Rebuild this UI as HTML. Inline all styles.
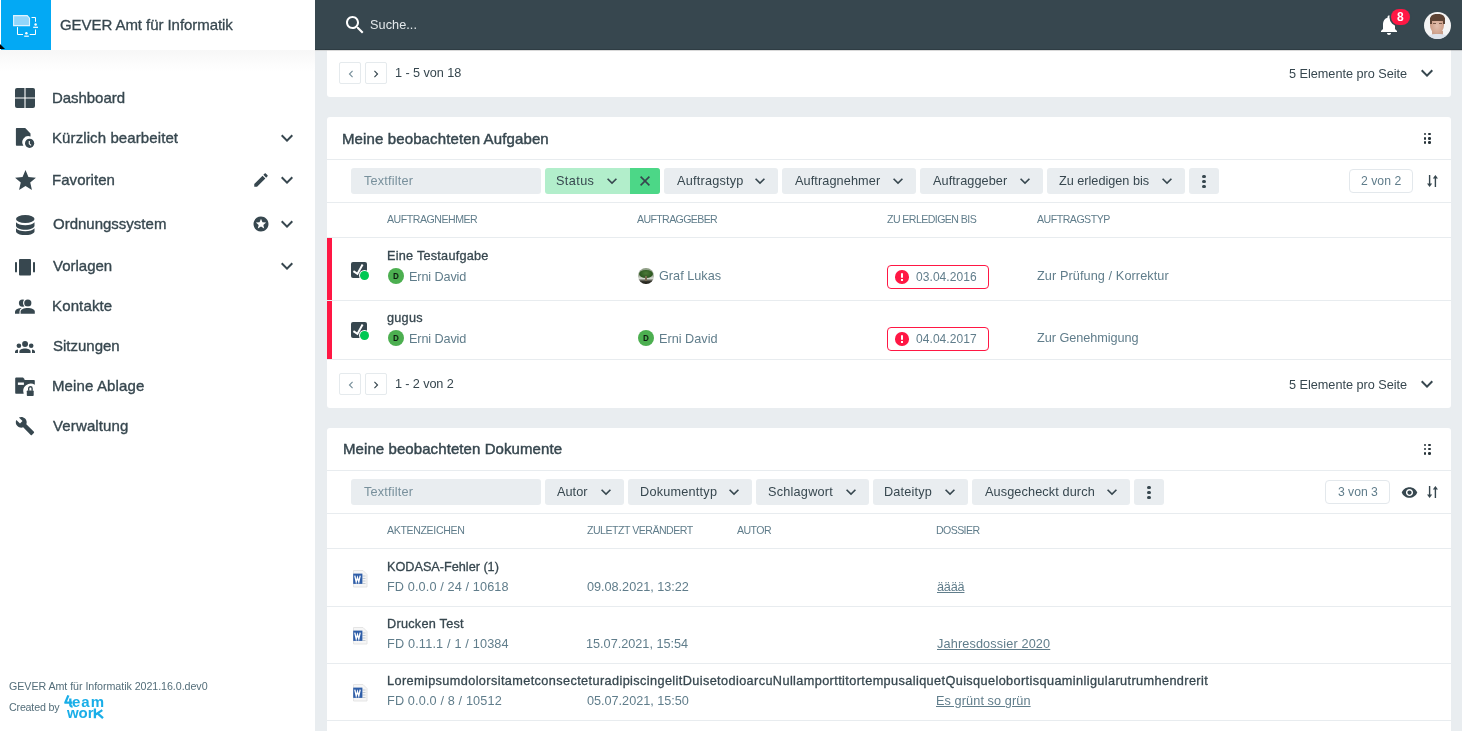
<!DOCTYPE html>
<html><head><meta charset="utf-8"><title>GEVER Dashboard</title>
<style>
html,body{margin:0;padding:0}
body{width:1462px;height:731px;overflow:hidden;position:relative;font-family:"Liberation Sans", sans-serif;background:#fff}
.t{position:absolute;white-space:nowrap;font-family:"Liberation Sans", sans-serif;will-change:transform}
svg{display:block}
</style></head><body>
<div style="position:absolute;left:315px;top:0px;width:1147px;height:731px;background:#e9edf0"></div>
<div style="position:absolute;left:327px;top:-20px;width:1124px;height:117px;background:#fff;border-radius:3px"></div>
<div style="position:absolute;left:327px;top:117px;width:1124px;height:291px;background:#fff;border-radius:3px"></div>
<div style="position:absolute;left:327px;top:428px;width:1124px;height:400px;background:#fff;border-radius:3px"></div>
<div style="position:absolute;left:339px;top:62px;width:20px;height:20px;border:1px solid #e5eaed;border-radius:2px;background:#fff"></div>
<div style="position:absolute;left:365px;top:62px;width:20px;height:20px;border:1px solid #e5eaed;border-radius:2px;background:#fff"></div>
<svg style="position:absolute;left:343.5px;top:66.5px;fill:#78909c" width="14" height="14" viewBox="0 0 24 24"><path d="M15.41 7.41L14 6l-6 6 6 6 1.41-1.41L10.83 12z"/></svg>
<svg style="position:absolute;left:369.3px;top:66.5px;fill:#37474f" width="14" height="14" viewBox="0 0 24 24"><path d="M10 6L8.59 7.41 13.17 12l-4.58 4.59L10 18l6-6z"/></svg>
<div class="t" style="left:394.70px;top:67.00px;font-size:12.7px;line-height:12.7px;color:#37474f;font-weight:normal;letter-spacing:-0.055px;">1 - 5 von 18</div>
<div class="t" style="left:1289.30px;top:68.00px;font-size:12.7px;line-height:12.7px;color:#37474f;font-weight:normal;letter-spacing:-0.021px;">5 Elemente pro Seite</div>
<svg style="position:absolute;left:1415.3px;top:60.99999999999999px;fill:#37474f" width="24" height="24" viewBox="0 0 24 24"><path d="M16.59 8.59L12 13.17 7.41 8.59 6 10l6 6 6-6z"/></svg>
<div class="t" style="left:342.40px;top:131.00px;font-size:15px;line-height:15px;color:#37474f;font-weight:normal;letter-spacing:0.123px;-webkit-text-stroke:0.45px #37474f;">Meine beobachteten Aufgaben</div>
<div style="position:absolute;left:1423.65px;top:132.95px;width:2.5px;height:2.5px;background:#263238;border-radius:50%"></div>
<div style="position:absolute;left:1423.65px;top:137.15px;width:2.5px;height:2.5px;background:#263238;border-radius:50%"></div>
<div style="position:absolute;left:1423.65px;top:141.35px;width:2.5px;height:2.5px;background:#263238;border-radius:50%"></div>
<div style="position:absolute;left:1428.05px;top:132.95px;width:2.5px;height:2.5px;background:#263238;border-radius:50%"></div>
<div style="position:absolute;left:1428.05px;top:137.15px;width:2.5px;height:2.5px;background:#263238;border-radius:50%"></div>
<div style="position:absolute;left:1428.05px;top:141.35px;width:2.5px;height:2.5px;background:#263238;border-radius:50%"></div>
<div style="position:absolute;left:327px;top:159px;width:1124px;height:1px;background:#e8ecef"></div>
<div style="position:absolute;left:351px;top:168px;width:190px;height:26px;background:#e9edf0;border-radius:3px"></div>
<div class="t" style="left:363.70px;top:175.00px;font-size:12.7px;line-height:12.7px;color:#78909c;font-weight:normal;letter-spacing:0.200px;">Textfilter</div>
<div style="position:absolute;left:545px;top:168px;width:115px;height:26px;background:#b2eecb;border-radius:3px"></div>
<div style="position:absolute;left:630px;top:168px;width:30px;height:26px;background:#4cd787;border-radius:0 3px 3px 0"></div>
<div class="t" style="left:556.20px;top:175.00px;font-size:12.7px;line-height:12.7px;color:#37474f;font-weight:normal;letter-spacing:0.400px;">Status</div>
<svg style="position:absolute;left:602px;top:170.8px;fill:#37474f" width="20" height="20" viewBox="0 0 24 24"><path d="M16.59 8.59L12 13.17 7.41 8.59 6 10l6 6 6-6z"/></svg>
<svg style="position:absolute;left:640px;top:176px;" width="10" height="10" viewBox="0 0 10 10"><path d="M0.6 0.6L9.4 9.4M9.4 0.6L0.6 9.4" stroke="#37474f" stroke-width="1.6"/></svg>
<div style="position:absolute;left:664.4px;top:168px;width:113.3px;height:26px;background:#e9edf0;border-radius:3px"></div>
<div class="t" style="left:676.60px;top:175.00px;font-size:12.7px;line-height:12.7px;color:#37474f;font-weight:normal;letter-spacing:0.220px;">Auftragstyp</div>
<svg style="position:absolute;left:749.9px;top:170.8px;fill:#37474f" width="20" height="20" viewBox="0 0 24 24"><path d="M16.59 8.59L12 13.17 7.41 8.59 6 10l6 6 6-6z"/></svg>
<div style="position:absolute;left:782.4px;top:168px;width:133.3px;height:26px;background:#e9edf0;border-radius:3px"></div>
<div class="t" style="left:794.60px;top:175.00px;font-size:12.7px;line-height:12.7px;color:#37474f;font-weight:normal;letter-spacing:0.100px;">Auftragnehmer</div>
<svg style="position:absolute;left:887.9px;top:170.8px;fill:#37474f" width="20" height="20" viewBox="0 0 24 24"><path d="M16.59 8.59L12 13.17 7.41 8.59 6 10l6 6 6-6z"/></svg>
<div style="position:absolute;left:920.3px;top:168px;width:122.6px;height:26px;background:#e9edf0;border-radius:3px"></div>
<div class="t" style="left:932.50px;top:175.00px;font-size:12.7px;line-height:12.7px;color:#37474f;font-weight:normal;letter-spacing:0.073px;">Auftraggeber</div>
<svg style="position:absolute;left:1015.1px;top:170.8px;fill:#37474f" width="20" height="20" viewBox="0 0 24 24"><path d="M16.59 8.59L12 13.17 7.41 8.59 6 10l6 6 6-6z"/></svg>
<div style="position:absolute;left:1047.1px;top:168px;width:137.8px;height:26px;background:#e9edf0;border-radius:3px"></div>
<div class="t" style="left:1059.30px;top:175.00px;font-size:12.7px;line-height:12.7px;color:#37474f;font-weight:normal;letter-spacing:-0.013px;">Zu erledigen bis</div>
<svg style="position:absolute;left:1157.1px;top:170.8px;fill:#37474f" width="20" height="20" viewBox="0 0 24 24"><path d="M16.59 8.59L12 13.17 7.41 8.59 6 10l6 6 6-6z"/></svg>
<div style="position:absolute;left:1189.2px;top:168px;width:30px;height:26px;background:#e9edf0;border-radius:3px"></div>
<div style="position:absolute;left:1202.4px;top:174.6px;width:3.2px;height:3.2px;background:#37474f;border-radius:50%"></div>
<div style="position:absolute;left:1202.4px;top:179.6px;width:3.2px;height:3.2px;background:#37474f;border-radius:50%"></div>
<div style="position:absolute;left:1202.4px;top:184.6px;width:3.2px;height:3.2px;background:#37474f;border-radius:50%"></div>
<div style="position:absolute;left:1348.5px;top:169.4px;width:64px;height:23.4px;border:1px solid #e3e8ec;border-radius:4px;background:#fff;box-sizing:border-box"></div>
<div class="t" style="left:1360.90px;top:175.00px;font-size:12.2px;line-height:12.2px;color:#607d8b;font-weight:normal;letter-spacing:0.033px;">2 von 2</div>
<svg style="position:absolute;left:1427px;top:174.8px;fill:#37474f" width="11" height="12" viewBox="0 0 11 12"><path d="M1.9 0h1.4v8.6h1.9L2.6 12 0 8.6h1.9z"/><path d="M7.7 12h1.4V3.4h1.9L8.4 0 5.8 3.4h1.9z"/></svg>
<div style="position:absolute;left:327px;top:202px;width:1124px;height:1px;background:#e8ecef"></div>
<div class="t" style="left:387.30px;top:214.00px;font-size:10.6px;line-height:10.6px;color:#607d8b;font-weight:normal;letter-spacing:-0.483px;">AUFTRAGNEHMER</div>
<div class="t" style="left:637.10px;top:214.00px;font-size:10.6px;line-height:10.6px;color:#607d8b;font-weight:normal;letter-spacing:-0.636px;">AUFTRAGGEBER</div>
<div class="t" style="left:887.40px;top:214.00px;font-size:10.6px;line-height:10.6px;color:#607d8b;font-weight:normal;letter-spacing:-0.573px;">ZU ERLEDIGEN BIS</div>
<div class="t" style="left:1037.00px;top:214.00px;font-size:10.6px;line-height:10.6px;color:#607d8b;font-weight:normal;letter-spacing:-0.500px;">AUFTRAGSTYP</div>
<div style="position:absolute;left:327px;top:237px;width:1124px;height:1px;background:#e8ecef"></div>
<div style="position:absolute;left:327px;top:238px;width:5px;height:62px;background:#ff1744"></div>
<div style="position:absolute;left:351.2px;top:262px;width:15.5px;height:15.6px;background:#37474f;border-radius:2px"></div>
<svg style="position:absolute;left:351px;top:262px;" width="16" height="16" viewBox="0 0 16 16"><path d="M2.4 9.2L6.4 11.9L11.6 2.6" stroke="#fff" stroke-width="2" fill="none"/></svg>
<div style="position:absolute;left:359.2px;top:270.2px;width:10.8px;height:10.8px;background:#fff;border-radius:50%"></div>
<div style="position:absolute;left:360.2px;top:271.2px;width:8.8px;height:8.8px;background:#00c853;border-radius:50%"></div>
<div class="t" style="left:386.60px;top:250.00px;font-size:12.7px;line-height:12.7px;color:#37474f;font-weight:normal;letter-spacing:0.240px;-webkit-text-stroke:0.3px #37474f;">Eine Testaufgabe</div>
<div style="position:absolute;left:388px;top:268px;width:16px;height:16px;background:#4caf50;border-radius:50%"></div>
<div class="t" style="left:393.1px;top:271.2px;font-size:9.5px;line-height:9px;font-weight:bold;color:#0d1a10;transform:scaleX(.85);transform-origin:left top">D</div>
<div class="t" style="left:408.70px;top:271.00px;font-size:12.7px;line-height:12.7px;color:#607d8b;font-weight:normal;letter-spacing:-0.133px;">Erni David</div>
<div style="position:absolute;left:638px;top:268px;width:16px;height:16px;border-radius:50%;overflow:hidden;background:linear-gradient(#8a9a80 0,#b5bdb0 55%,#d8dcd4 65%,#3a3a30 82%,#15150f 100%)"><div style="position:absolute;left:1px;top:1.5px;width:14px;height:8.5px;border-radius:50%;background:radial-gradient(ellipse at 50% 40%,#4d7a38 0,#2f5a22 60%,#3d5a30 100%)"></div><div style="position:absolute;left:7.3px;top:8px;width:1.5px;height:5px;background:#7a6a50"></div></div>
<div class="t" style="left:658.50px;top:270.00px;font-size:12.7px;line-height:12.7px;color:#607d8b;font-weight:normal;letter-spacing:0.000px;">Graf Lukas</div>
<div style="position:absolute;left:887px;top:265px;width:102px;height:24px;border:1px solid #ff1744;border-radius:4px;box-sizing:border-box"></div>
<div style="position:absolute;left:895.2px;top:270px;width:13.5px;height:13.5px;background:#ff1744;border-radius:50%"></div>
<div style="position:absolute;left:901.1px;top:272.8px;width:1.8px;height:5.2px;background:#fff;border-radius:1px"></div>
<div style="position:absolute;left:901.1px;top:279.1px;width:1.8px;height:1.8px;background:#fff"></div>
<div class="t" style="left:916.10px;top:271.00px;font-size:12px;line-height:12px;color:#607d8b;font-weight:normal;letter-spacing:0.067px;">03.04.2016</div>
<div class="t" style="left:1037.20px;top:270.00px;font-size:12.7px;line-height:12.7px;color:#607d8b;font-weight:normal;letter-spacing:0.091px;">Zur Prüfung / Korrektur</div>
<div style="position:absolute;left:327px;top:300px;width:1124px;height:1px;background:#e8ecef"></div>
<div style="position:absolute;left:327px;top:301px;width:5px;height:58px;background:#ff1744"></div>
<div style="position:absolute;left:351.2px;top:322px;width:15.5px;height:15.6px;background:#37474f;border-radius:2px"></div>
<svg style="position:absolute;left:351px;top:322px;" width="16" height="16" viewBox="0 0 16 16"><path d="M2.4 9.2L6.4 11.9L11.6 2.6" stroke="#fff" stroke-width="2" fill="none"/></svg>
<div style="position:absolute;left:359.2px;top:330.2px;width:10.8px;height:10.8px;background:#fff;border-radius:50%"></div>
<div style="position:absolute;left:360.2px;top:331.2px;width:8.8px;height:8.8px;background:#00c853;border-radius:50%"></div>
<div class="t" style="left:387.40px;top:312.00px;font-size:12.7px;line-height:12.7px;color:#37474f;font-weight:normal;letter-spacing:0.250px;-webkit-text-stroke:0.3px #37474f;">gugus</div>
<div style="position:absolute;left:388px;top:330px;width:16px;height:16px;background:#4caf50;border-radius:50%"></div>
<div class="t" style="left:393.1px;top:333.2px;font-size:9.5px;line-height:9px;font-weight:bold;color:#0d1a10;transform:scaleX(.85);transform-origin:left top">D</div>
<div class="t" style="left:408.70px;top:333.00px;font-size:12.7px;line-height:12.7px;color:#607d8b;font-weight:normal;letter-spacing:-0.133px;">Erni David</div>
<div style="position:absolute;left:638px;top:330px;width:16px;height:16px;background:#4caf50;border-radius:50%"></div>
<div class="t" style="left:643.1px;top:333.2px;font-size:9.5px;line-height:9px;font-weight:bold;color:#0d1a10;transform:scaleX(.85);transform-origin:left top">D</div>
<div class="t" style="left:658.50px;top:333.00px;font-size:12.7px;line-height:12.7px;color:#607d8b;font-weight:normal;letter-spacing:0.000px;">Erni David</div>
<div style="position:absolute;left:887px;top:327px;width:102px;height:24px;border:1px solid #ff1744;border-radius:4px;box-sizing:border-box"></div>
<div style="position:absolute;left:895.2px;top:332px;width:13.5px;height:13.5px;background:#ff1744;border-radius:50%"></div>
<div style="position:absolute;left:901.1px;top:334.8px;width:1.8px;height:5.2px;background:#fff;border-radius:1px"></div>
<div style="position:absolute;left:901.1px;top:341.1px;width:1.8px;height:1.8px;background:#fff"></div>
<div class="t" style="left:916.10px;top:333.00px;font-size:12px;line-height:12px;color:#607d8b;font-weight:normal;letter-spacing:0.067px;">04.04.2017</div>
<div class="t" style="left:1037.20px;top:332.00px;font-size:12.7px;line-height:12.7px;color:#607d8b;font-weight:normal;letter-spacing:-0.043px;">Zur Genehmigung</div>
<div style="position:absolute;left:327px;top:359px;width:1124px;height:1px;background:#e8ecef"></div>
<div style="position:absolute;left:339px;top:373px;width:20px;height:20px;border:1px solid #e5eaed;border-radius:2px;background:#fff"></div>
<div style="position:absolute;left:365px;top:373px;width:20px;height:20px;border:1px solid #e5eaed;border-radius:2px;background:#fff"></div>
<svg style="position:absolute;left:343.5px;top:377.5px;fill:#78909c" width="14" height="14" viewBox="0 0 24 24"><path d="M15.41 7.41L14 6l-6 6 6 6 1.41-1.41L10.83 12z"/></svg>
<svg style="position:absolute;left:369.3px;top:377.5px;fill:#37474f" width="14" height="14" viewBox="0 0 24 24"><path d="M10 6L8.59 7.41 13.17 12l-4.58 4.59L10 18l6-6z"/></svg>
<div class="t" style="left:394.70px;top:378.00px;font-size:12.7px;line-height:12.7px;color:#37474f;font-weight:normal;letter-spacing:-0.120px;">1 - 2 von 2</div>
<div class="t" style="left:1289.30px;top:379.00px;font-size:12.7px;line-height:12.7px;color:#37474f;font-weight:normal;letter-spacing:-0.021px;">5 Elemente pro Seite</div>
<svg style="position:absolute;left:1415.3px;top:372.09999999999997px;fill:#37474f" width="24" height="24" viewBox="0 0 24 24"><path d="M16.59 8.59L12 13.17 7.41 8.59 6 10l6 6 6-6z"/></svg>
<div class="t" style="left:342.50px;top:441.00px;font-size:15px;line-height:15px;color:#37474f;font-weight:normal;letter-spacing:0.081px;-webkit-text-stroke:0.45px #37474f;">Meine beobachteten Dokumente</div>
<div style="position:absolute;left:1423.65px;top:443.75px;width:2.5px;height:2.5px;background:#263238;border-radius:50%"></div>
<div style="position:absolute;left:1423.65px;top:447.95px;width:2.5px;height:2.5px;background:#263238;border-radius:50%"></div>
<div style="position:absolute;left:1423.65px;top:452.15px;width:2.5px;height:2.5px;background:#263238;border-radius:50%"></div>
<div style="position:absolute;left:1428.05px;top:443.75px;width:2.5px;height:2.5px;background:#263238;border-radius:50%"></div>
<div style="position:absolute;left:1428.05px;top:447.95px;width:2.5px;height:2.5px;background:#263238;border-radius:50%"></div>
<div style="position:absolute;left:1428.05px;top:452.15px;width:2.5px;height:2.5px;background:#263238;border-radius:50%"></div>
<div style="position:absolute;left:327px;top:470px;width:1124px;height:1px;background:#e8ecef"></div>
<div style="position:absolute;left:351px;top:479px;width:190px;height:26px;background:#e9edf0;border-radius:3px"></div>
<div class="t" style="left:363.70px;top:486.00px;font-size:12.7px;line-height:12.7px;color:#78909c;font-weight:normal;letter-spacing:0.200px;">Textfilter</div>
<div style="position:absolute;left:545.1px;top:479px;width:78.6px;height:26px;background:#e9edf0;border-radius:3px"></div>
<div class="t" style="left:557.30px;top:486.00px;font-size:12.7px;line-height:12.7px;color:#37474f;font-weight:normal;letter-spacing:0.050px;">Autor</div>
<svg style="position:absolute;left:595.9px;top:481.8px;fill:#37474f" width="20" height="20" viewBox="0 0 24 24"><path d="M16.59 8.59L12 13.17 7.41 8.59 6 10l6 6 6-6z"/></svg>
<div style="position:absolute;left:628.4px;top:479px;width:123.2px;height:26px;background:#e9edf0;border-radius:3px"></div>
<div class="t" style="left:639.60px;top:486.00px;font-size:12.7px;line-height:12.7px;color:#37474f;font-weight:normal;letter-spacing:0.220px;">Dokumenttyp</div>
<svg style="position:absolute;left:723.8px;top:481.8px;fill:#37474f" width="20" height="20" viewBox="0 0 24 24"><path d="M16.59 8.59L12 13.17 7.41 8.59 6 10l6 6 6-6z"/></svg>
<div style="position:absolute;left:756.3px;top:479px;width:112.3px;height:26px;background:#e9edf0;border-radius:3px"></div>
<div class="t" style="left:767.50px;top:486.00px;font-size:12.7px;line-height:12.7px;color:#37474f;font-weight:normal;letter-spacing:0.222px;">Schlagwort</div>
<svg style="position:absolute;left:840.8px;top:481.8px;fill:#37474f" width="20" height="20" viewBox="0 0 24 24"><path d="M16.59 8.59L12 13.17 7.41 8.59 6 10l6 6 6-6z"/></svg>
<div style="position:absolute;left:873.1px;top:479px;width:94.6px;height:26px;background:#e9edf0;border-radius:3px"></div>
<div class="t" style="left:884.30px;top:486.00px;font-size:12.7px;line-height:12.7px;color:#37474f;font-weight:normal;letter-spacing:0.171px;">Dateityp</div>
<svg style="position:absolute;left:939.9px;top:481.8px;fill:#37474f" width="20" height="20" viewBox="0 0 24 24"><path d="M16.59 8.59L12 13.17 7.41 8.59 6 10l6 6 6-6z"/></svg>
<div style="position:absolute;left:972.4px;top:479px;width:157.5px;height:26px;background:#e9edf0;border-radius:3px"></div>
<div class="t" style="left:984.60px;top:486.00px;font-size:12.7px;line-height:12.7px;color:#37474f;font-weight:normal;letter-spacing:0.112px;">Ausgecheckt durch</div>
<svg style="position:absolute;left:1102.1px;top:481.8px;fill:#37474f" width="20" height="20" viewBox="0 0 24 24"><path d="M16.59 8.59L12 13.17 7.41 8.59 6 10l6 6 6-6z"/></svg>
<div style="position:absolute;left:1134.2px;top:479px;width:30px;height:26px;background:#e9edf0;border-radius:3px"></div>
<div style="position:absolute;left:1147.4px;top:485.59999999999997px;width:3.2px;height:3.2px;background:#37474f;border-radius:50%"></div>
<div style="position:absolute;left:1147.4px;top:490.59999999999997px;width:3.2px;height:3.2px;background:#37474f;border-radius:50%"></div>
<div style="position:absolute;left:1147.4px;top:495.59999999999997px;width:3.2px;height:3.2px;background:#37474f;border-radius:50%"></div>
<div style="position:absolute;left:1325.3px;top:480.4px;width:64.4px;height:23.2px;border:1px solid #e3e8ec;border-radius:4px;background:#fff;box-sizing:border-box"></div>
<div class="t" style="left:1337.60px;top:486.00px;font-size:12.2px;line-height:12.2px;color:#607d8b;font-weight:normal;letter-spacing:-0.033px;">3 von 3</div>
<svg style="position:absolute;left:1401.1px;top:483.8px;fill:#37474f" width="17" height="17" viewBox="0 0 24 24"><path d="M12 4.5C7 4.5 2.73 7.61 1 12c1.73 4.39 6 7.5 11 7.5s9.27-3.11 11-7.5c-1.73-4.39-6-7.5-11-7.5zM12 17c-2.76 0-5-2.24-5-5s2.24-5 5-5 5 2.24 5 5-2.24 5-5 5zm0-8c-1.66 0-3 1.34-3 3s1.34 3 3 3 3-1.34 3-3-1.34-3-3-3z"/></svg>
<svg style="position:absolute;left:1427px;top:485.8px;fill:#37474f" width="11" height="12" viewBox="0 0 11 12"><path d="M1.9 0h1.4v8.6h1.9L2.6 12 0 8.6h1.9z"/><path d="M7.7 12h1.4V3.4h1.9L8.4 0 5.8 3.4h1.9z"/></svg>
<div style="position:absolute;left:327px;top:513px;width:1124px;height:1px;background:#e8ecef"></div>
<div class="t" style="left:386.80px;top:525.00px;font-size:10.6px;line-height:10.6px;color:#607d8b;font-weight:normal;letter-spacing:-0.364px;">AKTENZEICHEN</div>
<div class="t" style="left:587.10px;top:525.00px;font-size:10.6px;line-height:10.6px;color:#607d8b;font-weight:normal;letter-spacing:-0.513px;">ZULETZT VERÄNDERT</div>
<div class="t" style="left:737.00px;top:525.00px;font-size:10.6px;line-height:10.6px;color:#607d8b;font-weight:normal;letter-spacing:-0.550px;">AUTOR</div>
<div class="t" style="left:936.30px;top:525.00px;font-size:10.6px;line-height:10.6px;color:#607d8b;font-weight:normal;letter-spacing:-0.600px;">DOSSIER</div>
<div style="position:absolute;left:327px;top:548px;width:1124px;height:1px;background:#e8ecef"></div>
<svg style="position:absolute;left:352px;top:569.5px" width="16" height="18" viewBox="0 0 16 18"><path d="M1.5 0.5h9.5l4 4v12.5h-13.5z" fill="#f6f6f6" stroke="#e0e0e0" stroke-width="0.8"/><path d="M10.5 6h3M10.5 8.5h3M10.5 11h3M10.5 13.5h3" stroke="#bcc5cf" stroke-width="0.9"/><rect x="1.2" y="3.6" width="9.2" height="10.3" fill="#2f5ea8"/><path d="M2.8 5.6l1.4 6.3 1.3-4.3 1.3 4.3 1.4-6.3" stroke="#fff" stroke-width="1.3" fill="none"/></svg>
<div class="t" style="left:386.50px;top:561.00px;font-size:12.7px;line-height:12.7px;color:#37474f;font-weight:normal;letter-spacing:-0.013px;-webkit-text-stroke:0.3px #37474f;">KODASA-Fehler (1)</div>
<div class="t" style="left:386.50px;top:581.00px;font-size:12.7px;line-height:12.7px;color:#607d8b;font-weight:normal;letter-spacing:0.120px;">FD 0.0.0 / 24 / 10618</div>
<div class="t" style="left:587.40px;top:581.00px;font-size:12.7px;line-height:12.7px;color:#607d8b;font-weight:normal;letter-spacing:-0.025px;">09.08.2021, 13:22</div>
<div style="position:absolute;left:327px;top:606px;width:1124px;height:1px;background:#e8ecef"></div>
<svg style="position:absolute;left:352px;top:626.5px" width="16" height="18" viewBox="0 0 16 18"><path d="M1.5 0.5h9.5l4 4v12.5h-13.5z" fill="#f6f6f6" stroke="#e0e0e0" stroke-width="0.8"/><path d="M10.5 6h3M10.5 8.5h3M10.5 11h3M10.5 13.5h3" stroke="#bcc5cf" stroke-width="0.9"/><rect x="1.2" y="3.6" width="9.2" height="10.3" fill="#2f5ea8"/><path d="M2.8 5.6l1.4 6.3 1.3-4.3 1.3 4.3 1.4-6.3" stroke="#fff" stroke-width="1.3" fill="none"/></svg>
<div class="t" style="left:386.50px;top:618.00px;font-size:12.7px;line-height:12.7px;color:#37474f;font-weight:normal;letter-spacing:0.255px;-webkit-text-stroke:0.3px #37474f;">Drucken Test</div>
<div class="t" style="left:386.50px;top:638.00px;font-size:12.7px;line-height:12.7px;color:#607d8b;font-weight:normal;letter-spacing:0.170px;">FD 0.11.1 / 1 / 10384</div>
<div class="t" style="left:586.40px;top:638.00px;font-size:12.7px;line-height:12.7px;color:#607d8b;font-weight:normal;letter-spacing:-0.012px;">15.07.2021, 15:54</div>
<div style="position:absolute;left:327px;top:663px;width:1124px;height:1px;background:#e8ecef"></div>
<svg style="position:absolute;left:352px;top:683.5px" width="16" height="18" viewBox="0 0 16 18"><path d="M1.5 0.5h9.5l4 4v12.5h-13.5z" fill="#f6f6f6" stroke="#e0e0e0" stroke-width="0.8"/><path d="M10.5 6h3M10.5 8.5h3M10.5 11h3M10.5 13.5h3" stroke="#bcc5cf" stroke-width="0.9"/><rect x="1.2" y="3.6" width="9.2" height="10.3" fill="#2f5ea8"/><path d="M2.8 5.6l1.4 6.3 1.3-4.3 1.3 4.3 1.4-6.3" stroke="#fff" stroke-width="1.3" fill="none"/></svg>
<div class="t" style="left:386.50px;top:675.00px;font-size:12.7px;line-height:12.7px;color:#37474f;font-weight:normal;letter-spacing:0.395px;-webkit-text-stroke:0.3px #37474f;">LoremipsumdolorsitametconsecteturadipiscingelitDuisetodioarcuNullamporttitortempusaliquetQuisquelobortisquaminligularutrumhendrerit</div>
<div class="t" style="left:386.50px;top:695.00px;font-size:12.7px;line-height:12.7px;color:#607d8b;font-weight:normal;letter-spacing:0.137px;">FD 0.0.0 / 8 / 10512</div>
<div class="t" style="left:587.40px;top:695.00px;font-size:12.7px;line-height:12.7px;color:#607d8b;font-weight:normal;letter-spacing:-0.025px;">05.07.2021, 15:50</div>
<div style="position:absolute;left:327px;top:720px;width:1124px;height:1px;background:#e8ecef"></div>
<div class="t" style="left:937.30px;top:581.00px;font-size:12.7px;line-height:12.7px;color:#607d8b;font-weight:normal;letter-spacing:-0.200px;text-decoration:underline">ääää</div>
<div class="t" style="left:937.30px;top:638.00px;font-size:12.7px;line-height:12.7px;color:#607d8b;font-weight:normal;letter-spacing:0.141px;text-decoration:underline">Jahresdossier 2020</div>
<div class="t" style="left:936.30px;top:695.00px;font-size:12.7px;line-height:12.7px;color:#607d8b;font-weight:normal;letter-spacing:0.093px;text-decoration:underline">Es grünt so grün</div>
<div style="position:absolute;left:0px;top:0px;width:315px;height:731px;background:#fff"></div>
<div style="position:absolute;left:0px;top:0px;width:315px;height:50px;background:#fff"></div>
<div style="position:absolute;left:0px;top:50px;width:315px;height:22px;background:linear-gradient(#f7f7f7,#fff)"></div>
<div style="position:absolute;left:1px;top:0px;width:50px;height:50px;background:#03a9f4"></div>
<svg style="position:absolute;left:0px;top:0px;" width="52" height="52" viewBox="0 0 52 52"><path d="M13.6 15.6h13.6l2.3 2.6v7.4h-15.9z" fill="#92d6fb" stroke="#dff3fe" stroke-width="1.1"/><path d="M31.5 17.5h4v4.3M35.5 29.5v5h-5.8M23 34.5h-5.5v-7.4" fill="none" stroke="#fff" stroke-width="1"/><circle cx="35.6" cy="24.4" r="1.25" fill="#fff"/><path d="M33.2 27.3h4.8" stroke="#fff" stroke-width="1.2"/><circle cx="26.4" cy="33.2" r="1.25" fill="#fff"/><path d="M24.2 36.2h4.6" stroke="#fff" stroke-width="1.2"/></svg>
<svg style="position:absolute;left:0px;top:42px;" width="8" height="8" viewBox="0 0 8 8"><path d="M0 2L5 7H0z" fill="#000"/></svg>
<div class="t" style="left:59.80px;top:17.00px;font-size:15px;line-height:15px;color:#37474f;font-weight:normal;letter-spacing:-0.061px;-webkit-text-stroke:0.3px #37474f;">GEVER Amt für Informatik</div>
<div class="t" style="left:51.60px;top:90.00px;font-size:15px;line-height:15px;color:#37474f;font-weight:normal;letter-spacing:-0.050px;-webkit-text-stroke:0.35px #37474f;">Dashboard</div>
<div class="t" style="left:51.60px;top:130.00px;font-size:15px;line-height:15px;color:#37474f;font-weight:normal;letter-spacing:0.100px;-webkit-text-stroke:0.35px #37474f;">Kürzlich bearbeitet</div>
<div class="t" style="left:51.60px;top:172.00px;font-size:15px;line-height:15px;color:#37474f;font-weight:normal;letter-spacing:0.050px;-webkit-text-stroke:0.35px #37474f;">Favoriten</div>
<div class="t" style="left:52.60px;top:216.00px;font-size:15px;line-height:15px;color:#37474f;font-weight:normal;letter-spacing:0.000px;-webkit-text-stroke:0.35px #37474f;">Ordnungssystem</div>
<div class="t" style="left:52.60px;top:258.00px;font-size:15px;line-height:15px;color:#37474f;font-weight:normal;letter-spacing:-0.000px;-webkit-text-stroke:0.35px #37474f;">Vorlagen</div>
<div class="t" style="left:51.60px;top:298.00px;font-size:15px;line-height:15px;color:#37474f;font-weight:normal;letter-spacing:0.143px;-webkit-text-stroke:0.35px #37474f;">Kontakte</div>
<div class="t" style="left:52.60px;top:338.00px;font-size:15px;line-height:15px;color:#37474f;font-weight:normal;letter-spacing:0.000px;-webkit-text-stroke:0.35px #37474f;">Sitzungen</div>
<div class="t" style="left:51.60px;top:378.00px;font-size:15px;line-height:15px;color:#37474f;font-weight:normal;letter-spacing:0.127px;-webkit-text-stroke:0.35px #37474f;">Meine Ablage</div>
<div class="t" style="left:52.60px;top:418.00px;font-size:15px;line-height:15px;color:#37474f;font-weight:normal;letter-spacing:0.133px;-webkit-text-stroke:0.35px #37474f;">Verwaltung</div>
<svg style="position:absolute;left:15px;top:88px;fill:#37474f" width="20" height="20" viewBox="0 0 20 20"><path d="M2 0h16a2 2 0 0 1 2 2v16a2 2 0 0 1-2 2H2a2 2 0 0 1-2-2V2a2 2 0 0 1 2-2z"/><path d="M10 0v20M0 10h20" stroke="#fff" stroke-width="1.1"/></svg>
<svg style="position:absolute;left:15px;top:127px;fill:#37474f" width="22" height="22" viewBox="0 0 22 22"><path d="M1.9 1.1H10.2L15.5 6.4V9.5A6.1 6.1 0 0 0 8.4 18.7H1.9C1.3 18.7 .9 18.3 .9 17.7V2.1C.9 1.5 1.3 1.1 1.9 1.1z"/><circle cx="14.6" cy="16.35" r="4.6"/><path d="M14.3 13.9V16.8L16.1 18.4" stroke="#fff" stroke-width="1.1" fill="none"/></svg>
<svg style="position:absolute;left:12.5px;top:168px;fill:#37474f" width="25" height="25" viewBox="0 0 24 24"><path d="M12 17.27L18.18 21l-1.64-7.03L22 9.24l-7.19-.61L12 2 9.19 8.63 2 9.24l5.46 4.73L5.82 21z"/></svg>
<svg style="position:absolute;left:15.8px;top:215px;fill:#37474f" width="19" height="20" viewBox="0 0 19 20"><ellipse cx="9.25" cy="4" rx="9.25" ry="4"/><path d="M0 7.2c1.5 2 5 3 9.25 3s7.75-1 9.25-3v3.5c0 2.2-4 4-9.25 4S0 12.9 0 10.7z"/><path d="M0 13.2c1.5 2 5 3 9.25 3s7.75-1 9.25-3v3c0 2.2-4 4-9.25 4S0 18.4 0 16.2z"/></svg>
<svg style="position:absolute;left:15px;top:258.6px;fill:#37474f" width="20" height="17" viewBox="0 0 20 17"><rect x="4" y="0" width="12" height="16.4" rx="1"/><rect x="0" y="3" width="2" height="10.4" rx=".8"/><rect x="18" y="3" width="2" height="10.4" rx=".8"/></svg>
<svg style="position:absolute;left:15px;top:299.2px;fill:#37474f" width="20" height="15" viewBox="0 0 20 15"><circle cx="7.5" cy="4.1" r="3.6"/><path d="M0 14.8V12.7C0 10.6 3.5 9 7.5 9S15 10.6 15 12.7V14.8z"/><circle cx="12.8" cy="4" r="3.6" stroke="#fff" stroke-width="2.4" paint-order="stroke"/><path d="M5.6 14.8V12.5C5.6 10.2 9 8.9 12.7 8.9S19.8 10.2 19.8 12.5V14.8z" stroke="#fff" stroke-width="2.2" paint-order="stroke"/></svg>
<svg style="position:absolute;left:15px;top:341.2px;fill:#37474f" width="20" height="12" viewBox="0 -0.4 20 12"><circle cx="10.05" cy="2.6" r="2.95"/><circle cx="3.9" cy="4.3" r="2.3"/><circle cx="16.2" cy="4.3" r="2.3"/><path d="M4.4 11.6V10C4.4 8.3 7 7.1 10 7.1S15.6 8.3 15.6 10V11.6z"/><path d="M0 11.6V10.4C0 9.3 1.1 8.4 3 8.2V11.6zM20 11.6V10.4C20 9.3 18.9 8.4 17 8.2V11.6z"/></svg>
<svg style="position:absolute;left:15px;top:377px;fill:#37474f" width="20" height="20" viewBox="0 0 20 20"><path d="M.2 1.3C.2 .8.6.4 1.2.4H8L9.5 2V3H18.8C19.4 3 19.8 3.4 19.8 4V7.7A7.6 7.6 0 0 0 8.7 16.8H1.2C.6 16.8.2 16.4.2 15.8z"/><rect x="2.9" y="5.5" width="6" height="2.4" fill="#fff"/><rect x="11.8" y="13.5" width="6.9" height="5.6" rx=".8"/><path d="M13.7 13.7V11.5A1.7 1.7 0 0 1 17.1 11.5V13.7" stroke="#37474f" stroke-width="1.4" fill="none"/></svg>
<svg style="position:absolute;left:14.6px;top:416px;fill:#37474f" width="20" height="20" viewBox="0 0 24 24"><path d="M22.7 19l-9.1-9.1c.9-2.3.4-5-1.5-6.9-2-2-5-2.4-7.4-1.3L9 6 6 9 1.6 4.7C.4 7.1.9 10.1 2.9 12.1c1.9 1.9 4.6 2.4 6.9 1.5l9.1 9.1c.4.4 1 .4 1.4 0l2.3-2.3c.5-.4.5-1.1.1-1.4z"/></svg>
<svg style="position:absolute;left:275.1px;top:126.3px;fill:#37474f" width="24" height="24" viewBox="0 0 24 24"><path d="M16.59 8.59L12 13.17 7.41 8.59 6 10l6 6 6-6z"/></svg>
<svg style="position:absolute;left:275.1px;top:168.3px;fill:#37474f" width="24" height="24" viewBox="0 0 24 24"><path d="M16.59 8.59L12 13.17 7.41 8.59 6 10l6 6 6-6z"/></svg>
<svg style="position:absolute;left:275.1px;top:211.7px;fill:#37474f" width="24" height="24" viewBox="0 0 24 24"><path d="M16.59 8.59L12 13.17 7.41 8.59 6 10l6 6 6-6z"/></svg>
<svg style="position:absolute;left:275.1px;top:254.1px;fill:#37474f" width="24" height="24" viewBox="0 0 24 24"><path d="M16.59 8.59L12 13.17 7.41 8.59 6 10l6 6 6-6z"/></svg>
<svg style="position:absolute;left:251.5px;top:171.2px;fill:#37474f" width="18" height="18" viewBox="0 0 24 24"><path d="M3 17.25V21h3.75L17.81 9.94l-3.75-3.75L3 17.25zM20.71 7.04c.39-.39.39-1.02 0-1.41l-2.34-2.34c-.39-.39-1.02-.39-1.41 0l-1.83 1.83 3.75 3.75 1.83-1.83z"/></svg>
<svg style="position:absolute;left:252.1px;top:214.8px;fill:#37474f" width="18" height="18" viewBox="0 0 24 24"><path d="M11.99 2C6.47 2 2 6.48 2 12s4.47 10 9.99 10C17.52 22 22 17.52 22 12S17.52 2 11.99 2zm4.24 16L12 15.45 7.77 18l1.12-4.81-3.73-3.23 4.92-.42L12 5l1.92 4.53 4.92.42-3.73 3.23L16.23 18z"/></svg>
<div class="t" style="left:9.20px;top:681.00px;font-size:10.7px;line-height:10.7px;color:#546e7a;font-weight:normal;letter-spacing:-0.058px;">GEVER Amt für Informatik 2021.16.0.dev0</div>
<div class="t" style="left:9.20px;top:702.00px;font-size:10.7px;line-height:10.7px;color:#546e7a;font-weight:normal;letter-spacing:-0.200px;">Created by</div>
<div class="t" style="left:71.80px;top:694.00px;font-size:15px;line-height:15px;color:#1aaee8;font-weight:bold;letter-spacing:1.000px;">eam</div>
<div class="t" style="left:67.20px;top:705.00px;font-size:15px;line-height:15px;color:#1aaee8;font-weight:bold;letter-spacing:-0.100px;">wor</div>
<svg style="position:absolute;left:60px;top:692px;" width="30" height="30" viewBox="0 0 30 30"><path d="M8.4 3.4L5.3 10.6H12.4M10.3 6.6V12.6C10.3 14 11 14.6 12.6 14.6" stroke="#1aaee8" stroke-width="2.3" fill="none" stroke-linejoin="round"/></svg>
<svg style="position:absolute;left:90px;top:704px;" width="16" height="16" viewBox="0 0 16 16"><path d="M4.9 4.4V14.2M5.4 10.6L12.3 6.1M7.6 9.3L13 14.2" stroke="#1aaee8" stroke-width="2.3" fill="none"/></svg>
<div style="position:absolute;left:315px;top:50px;width:12px;height:1px;background:#f6f8f9"></div>
<div style="position:absolute;left:315px;top:0px;width:1147px;height:50px;background:#37474f;box-shadow:inset 0 -1px 0 rgba(0,0,0,.15),0 .5px .5px rgba(0,0,0,.15)"></div>
<svg style="position:absolute;left:343px;top:13px;fill:#fff" width="24" height="24" viewBox="0 0 24 24"><path d="M15.5 14h-.79l-.28-.27C15.41 12.59 16 11.11 16 9.5 16 5.91 13.09 3 9.5 3S3 5.91 3 9.5 5.91 16 9.5 16c1.61 0 3.09-.59 4.23-1.57l.27.28v.79l5 4.99L20.49 19l-4.99-5zm-6 0C7.01 14 5 11.990 5 9.5S7.01 5 9.5 5 14 7.01 14 9.5 11.99 14 9.5 14z"/></svg>
<div class="t" style="left:369.90px;top:19.00px;font-size:12.7px;line-height:12.7px;color:#e3e8eb;font-weight:normal;letter-spacing:0.057px;">Suche...</div>
<svg style="position:absolute;left:1377px;top:12.5px;fill:#fff" width="24" height="24" viewBox="0 0 24 24"><path d="M12 22c1.1 0 2-.9 2-2h-4c0 1.1.89 2 2 2zm6-6v-5c0-3.07-1.64-5.64-4.5-6.32V4c0-.83-.67-1.5-1.5-1.5s-1.5.67-1.5 1.5v.68C7.63 5.36 6 7.92 6 11v5l-2 2v1h16v-1l-2-2z"/></svg>
<div style="position:absolute;left:1390.9px;top:8.9px;width:19.1px;height:16.1px;background:#ff1744;border-radius:8px;box-shadow:0 0 0 1.6px #37474f"></div>
<div class="t" style="left:1397.00px;top:11.00px;font-size:12px;line-height:12px;color:#fff;font-weight:bold;letter-spacing:2.000px;">8</div>
<div style="position:absolute;left:1423.7px;top:11.6px;width:27.4px;height:27.4px;border-radius:50%;background:#f4f4f4;overflow:hidden"><div style="position:absolute;left:8px;top:19px;width:11px;height:6px;background:#caa08c"></div><div style="position:absolute;left:3px;top:22px;width:21px;height:8px;border-radius:40% 40% 0 0;background:#dde3ec"></div><div style="position:absolute;left:6.8px;top:4.5px;width:13.5px;height:18px;border-radius:45% 45% 50% 50%;background:radial-gradient(ellipse at 50% 55%,#e2bfae 0,#cfa28c 60%,#a8806c 100%)"></div><div style="position:absolute;left:6px;top:2px;width:15px;height:7px;border-radius:7px 7px 2px 2px;background:#5e4435"></div><div style="position:absolute;left:6px;top:6px;width:2px;height:6px;background:#5e4435"></div><div style="position:absolute;left:19px;top:6px;width:2px;height:6px;background:#5e4435"></div><div style="position:absolute;left:9px;top:11.5px;width:3px;height:1px;background:#7a5a4a"></div><div style="position:absolute;left:15px;top:11.5px;width:3px;height:1px;background:#7a5a4a"></div></div>
</body></html>
